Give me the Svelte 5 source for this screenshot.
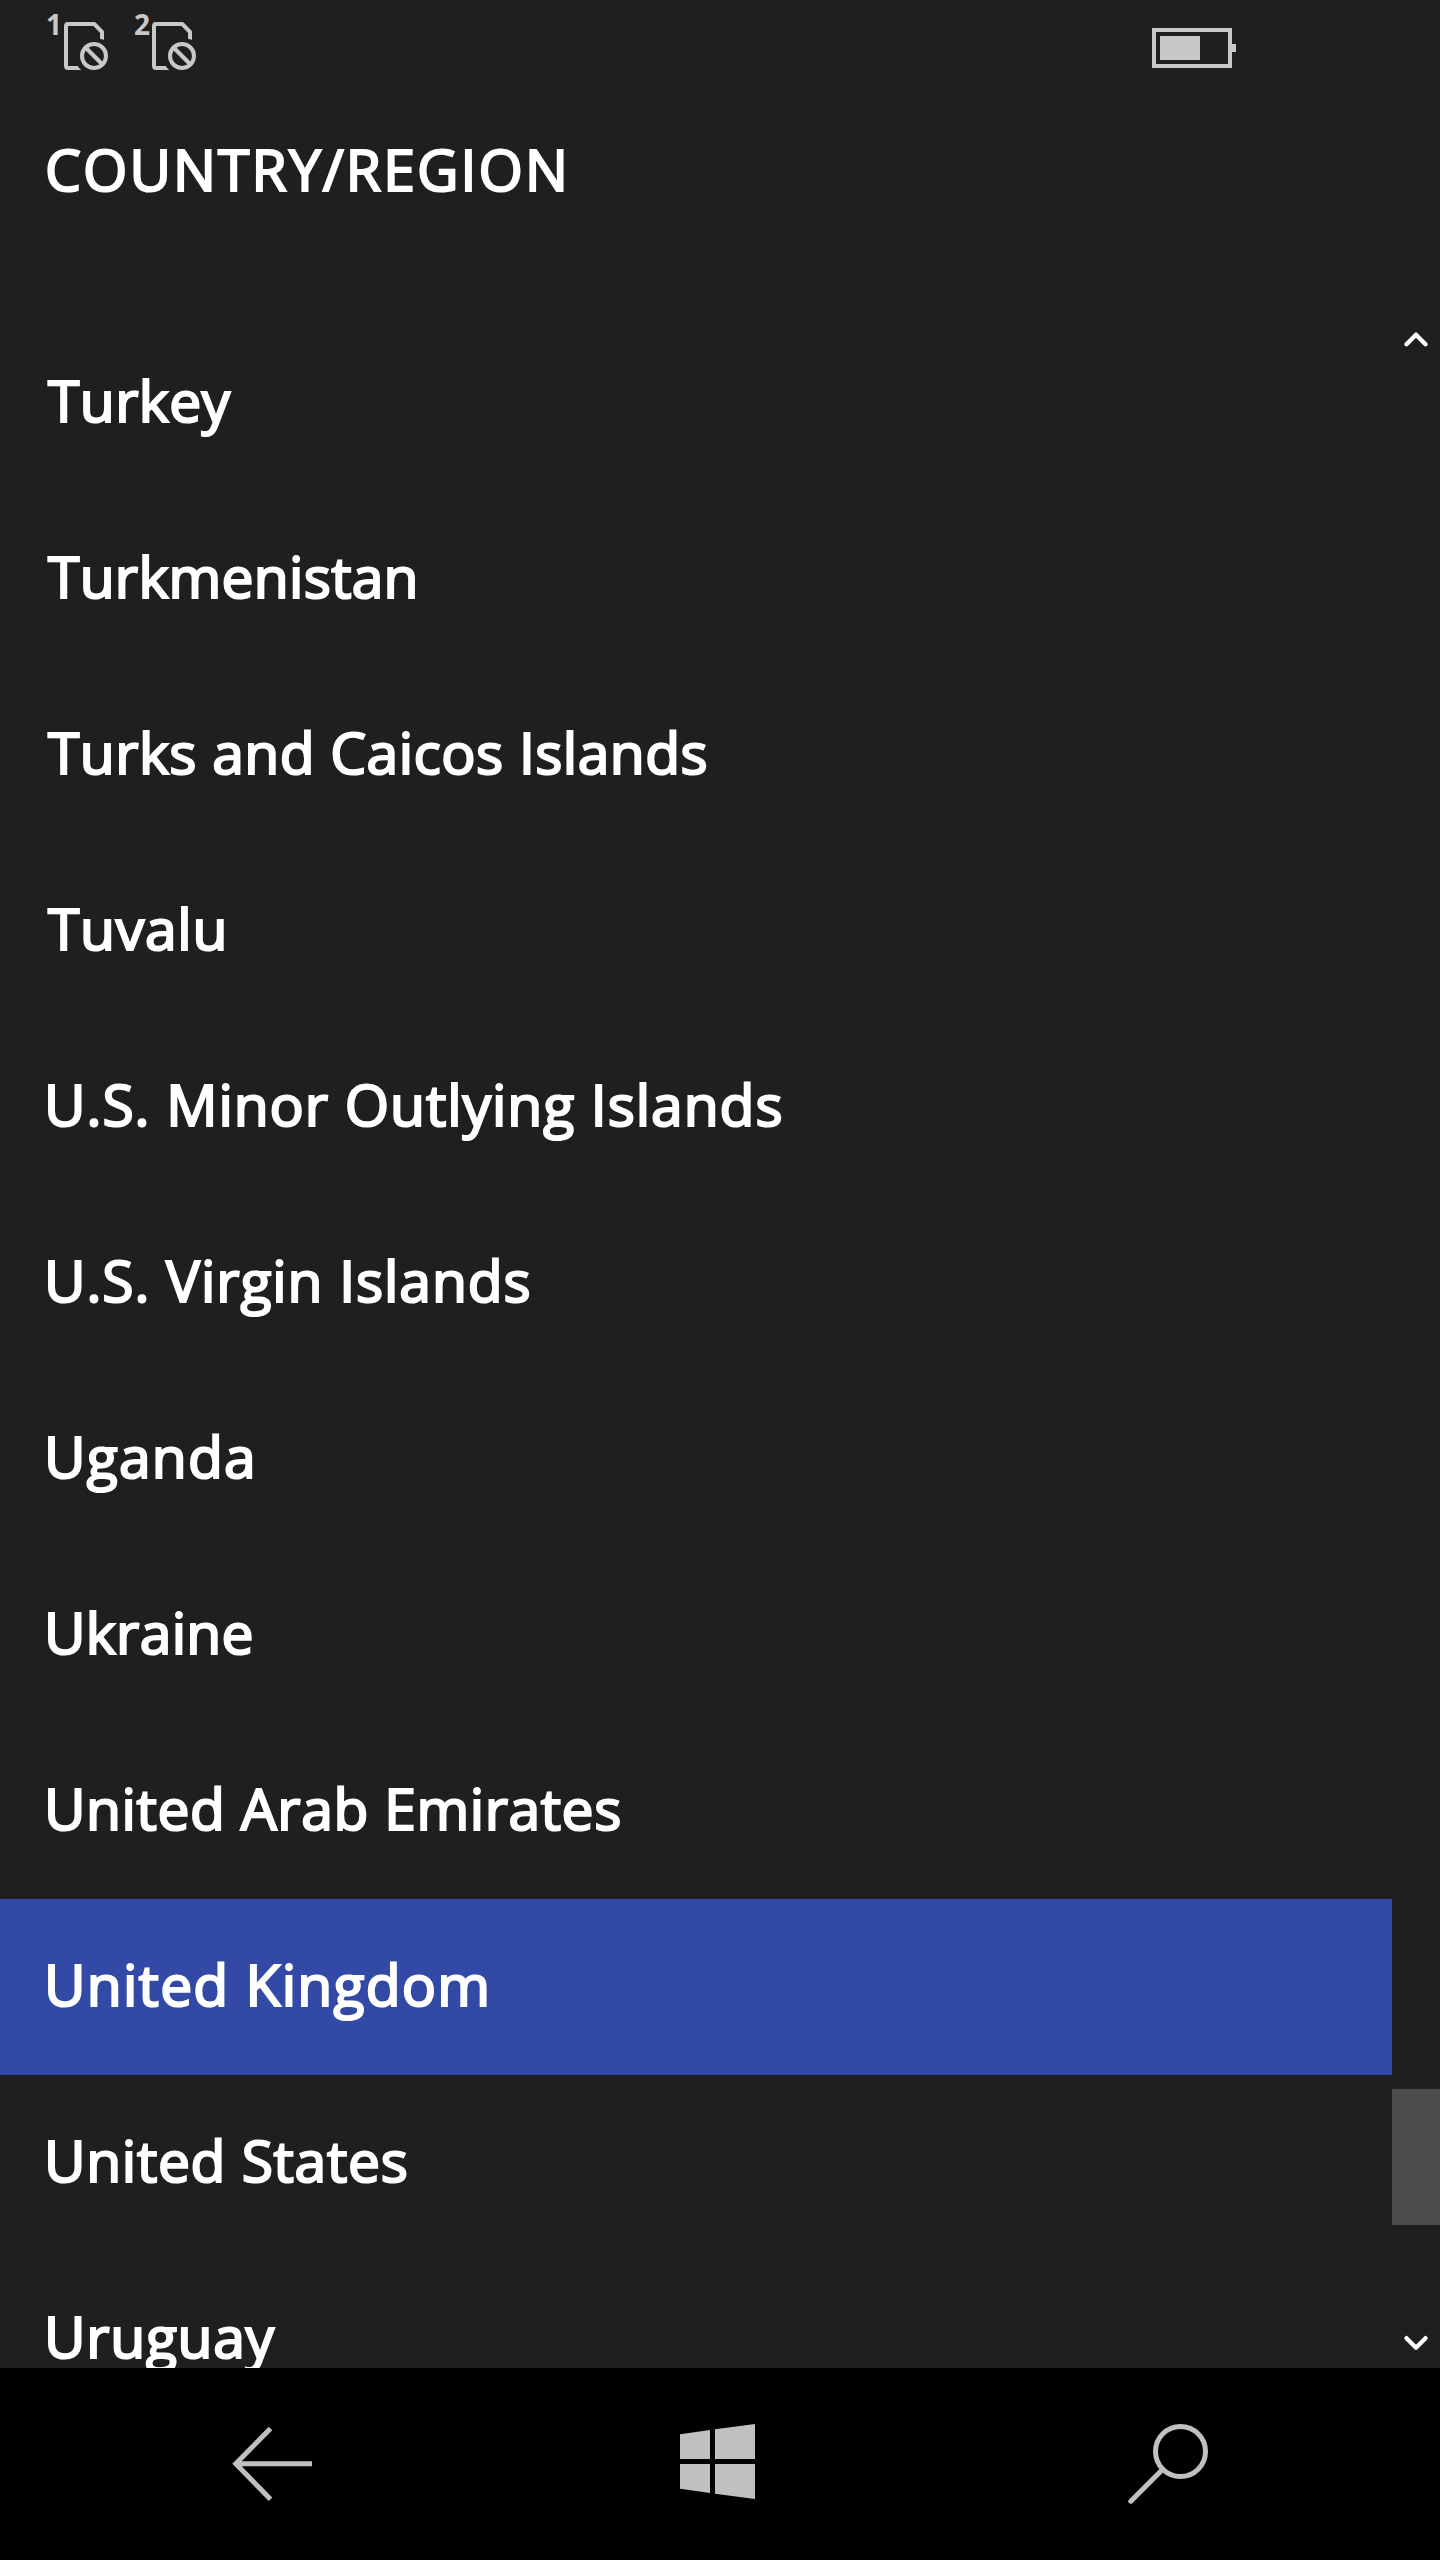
<script>
  const sims = [1, 2];
  const countries = [
    { name: 'Turkey', tracking: 0.4 },
    { name: 'Turkmenistan', tracking: 0.25 },
    { name: 'Turks and Caicos Islands', tracking: 0.44 },
    { name: 'Tuvalu', tracking: 0.7 },
    { name: 'U.S. Minor Outlying Islands', tracking: 0.93 },
    { name: 'U.S. Virgin Islands', tracking: 0.9 },
    { name: 'Uganda', tracking: 1.2 },
    { name: 'Ukraine', tracking: 0.3 },
    { name: 'United Arab Emirates', tracking: 0.55 },
    { name: 'United Kingdom', tracking: 1.23 },
    { name: 'United States', tracking: 0.68 },
    { name: 'Uruguay', tracking: 0.7 }
  ];
  let selected = $state('United Kingdom');
</script>

<div class="screen">
  <div class="status">
    <div class="sims">
      {#each sims as n}
        <div class="sim">
          <span class="num">{n}</span>
          <svg width="46" height="50" viewBox="0 0 46 50" fill="none" stroke="#c8c8c8" stroke-width="4">
            <path d="M38 17V9.8L30.2 2H4Q2 2 2 4V44Q2 46 4 46H14" stroke-linejoin="round" />
            <path d="M36 15H40V18L36 16.5ZM13.5 44 17 48H13.5Z" fill="#c8c8c8" stroke="none" />
            <circle cx="30" cy="34" r="12" />
            <path d="M22 26 38 42" />
          </svg>
        </div>
      {/each}
    </div>
    <svg class="battery" width="84" height="40" viewBox="0 0 84 40">
      <rect x="2" y="2" width="76" height="36" fill="none" stroke="#c8c8c8" stroke-width="4" />
      <rect x="8" y="8" width="40" height="24" fill="#c8c8c8" />
      <rect x="80" y="16" width="4" height="8" fill="#c8c8c8" />
    </svg>
  </div>

  <h1>COUNTRY/REGION</h1>

  <main>
    <ul>
      {#each countries as c}
        <li>
          <button
            class:selected={c.name === selected}
            class:wide={c.name.startsWith('T')}
            onclick={() => (selected = c.name)}
          ><span style="letter-spacing: {c.tracking}px">{c.name}</span></button>
        </li>
      {/each}
    </ul>
    <div class="scrollbar">
      <svg width="48" height="48" viewBox="0 0 48 48"><path d="M14.5 29.2 24 19.7 33.5 29.2" /></svg>
      <div class="thumb"></div>
      <svg width="48" height="48" viewBox="0 0 48 48"><path d="M14.5 18.2 24 27.7 33.5 18.2" /></svg>
    </div>
  </main>

  <nav>
    <svg width="80" height="80" viewBox="0 0 80 80" fill="none" stroke="#c0c0c0" stroke-width="5">
      <path d="M38.5 4.5 3.8 39.8 38.5 75.2M4.5 39.8H80" stroke-linejoin="miter" />
    </svg>
    <svg class="start" width="75" height="75" viewBox="0 0 75 75" fill="#c0c0c0">
      <path d="M0 10.2 30 6V35H0ZM35 5.3 75 0V35H35ZM0 40H30V69L0 64.8ZM35 40H75V75L35 69.7Z" />
    </svg>
    <svg width="80" height="80" viewBox="0 0 80 80" fill="none" stroke="#c0c0c0" stroke-width="5">
      <circle cx="52.5" cy="27.5" r="25" />
      <path d="M34.5 45.5 2.8 77.2" stroke-linecap="round" />
    </svg>
  </nav>
</div>

<style>
  :global(body) {
    margin: 0;
    background: #1f1f1f;
  }
  .screen {
    display: flex;
    flex-direction: column;
    width: 1440px;
    height: 2560px;
    overflow: hidden;
    background: #1f1f1f;
    color: #fff;
    font-family: 'Open Sans', sans-serif;
  }
  .status {
    display: flex;
    justify-content: space-between;
    box-sizing: border-box;
    height: 128px;
    padding: 10px 204px 0 46px;
  }
  .sims {
    display: flex;
  }
  .sim {
    display: flex;
    width: 88px;
  }
  .num {
    width: 18px;
    color: #c8c8c8;
    font-size: 28px;
    font-weight: 700;
    line-height: 28px;
    letter-spacing: -1px;
  }
  .sim svg {
    margin-top: 12px;
  }
  .battery {
    margin-top: 18px;
  }
  h1 {
    height: 187px;
    margin: 0;
    padding-left: 45px;
    box-sizing: border-box;
    font-size: 57px;
    font-weight: 400;
    line-height: 82px;
    letter-spacing: 2.1px;
    -webkit-text-stroke: 2.2px #fff;
  }
  main {
    display: flex;
    height: 2053px;
    overflow: hidden;
  }
  ul {
    flex: 1;
    margin: 0;
    padding: 0;
    list-style: none;
  }
  button {
    display: block;
    box-sizing: border-box;
    width: 100%;
    height: 176px;
    padding: 0 0 6px 44px;
    border: 0;
    background: none;
    color: inherit;
    font: 400 57px/170px 'Open Sans', sans-serif;
    text-align: left;
    -webkit-text-stroke: 2.2px #fff;
  }
  button.wide {
    padding-left: 48px;
  }
  button.selected {
    background: #3249a6;
  }
  .scrollbar {
    display: flex;
    flex-direction: column;
    justify-content: space-between;
    width: 48px;
  }
  .scrollbar svg {
    fill: none;
    stroke: #fff;
    stroke-width: 4.4;
    stroke-linecap: round;
    stroke-linejoin: round;
  }
  .thumb {
    height: 136px;
    margin: auto 0 95px;
    background: #4c4c4c;
  }
  nav {
    display: flex;
    align-items: flex-start;
    justify-content: space-between;
    box-sizing: border-box;
    height: 192px;
    padding: 56px 232px 0 232px;
    background: #000;
  }
  .start {
    margin-right: 5px;
  }
</style>
